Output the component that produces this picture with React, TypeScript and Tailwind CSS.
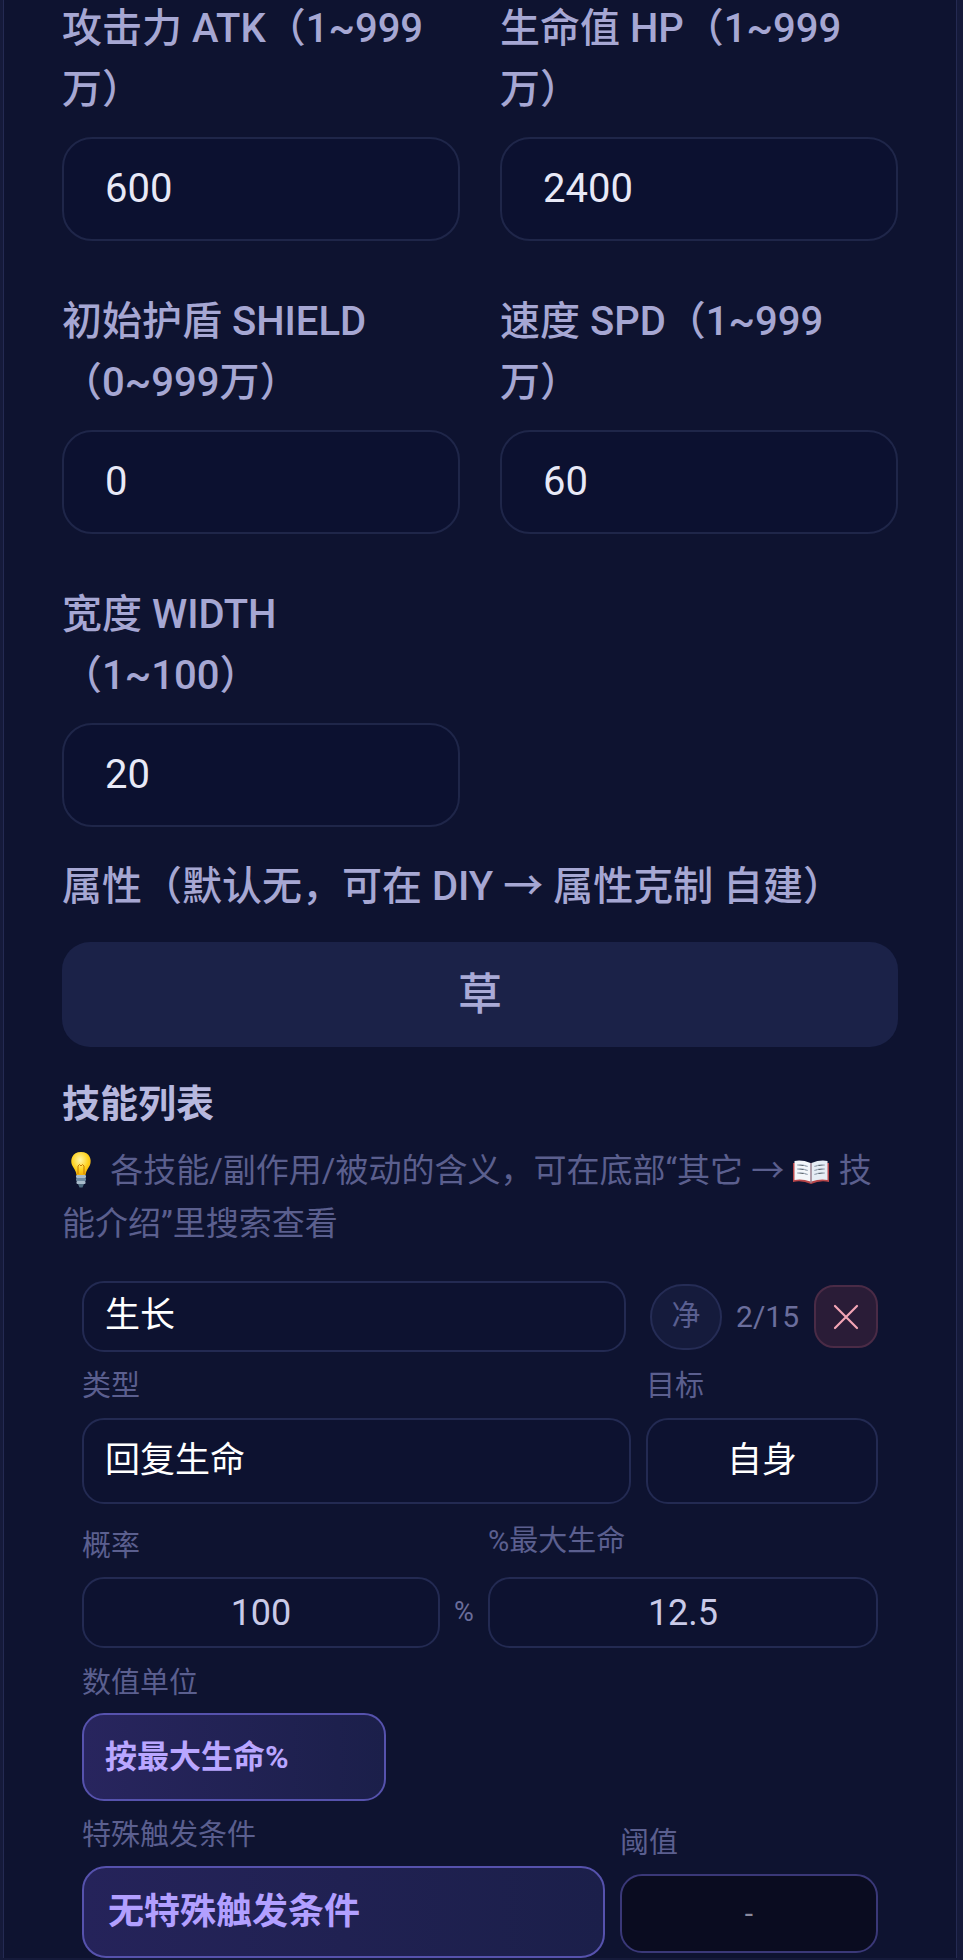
import React from "react";

function Field({ label, value }: { label: React.ReactNode; value: string }) {
  return (
    <div>
      <div className="whitespace-nowrap text-[40px] font-medium leading-[61px] text-[#a6a7d3]">{label}</div>
      <div className="mt-[17px] flex h-[104px] items-center rounded-[30px] border-2 border-[#1f2649] bg-[#0c1130] pl-[41px] text-[40px] text-[#e8e9f7]">
        {value}
      </div>
    </div>
  );
}

function Bulb() {
  return (
    <svg width="40" height="38" viewBox="0 0 40 38" className="inline-block align-[-7px]">
      <defs>
        <radialGradient id="bg1" cx="0.45" cy="0.35" r="0.7">
          <stop offset="0" stopColor="#fff6a8" />
          <stop offset="0.6" stopColor="#ffd21f" />
          <stop offset="1" stopColor="#f2a900" />
        </radialGradient>
      </defs>
      <path d="M19 1 C10 1 8 9 10 14 C11.5 17 14 19.5 14.5 24 L23.5 24 C24 19.5 26.5 17 28 14 C30 9 28 1 19 1 Z" fill="url(#bg1)" />
      <path d="M16 23 L16 15 M22 23 L22 15 M16 15 Q17.5 12 19 15 Q20.5 12 22 15" stroke="#c97a00" strokeWidth="1" fill="none" />
      <rect x="14" y="24" width="10" height="3" rx="1" fill="#a8bccb" />
      <rect x="14" y="27" width="10" height="3" rx="1" fill="#6f8aa0" />
      <rect x="14.5" y="30" width="9" height="3" rx="1" fill="#a8bccb" />
      <path d="M16 33 L22 33 L20.5 36.5 L17.5 36.5 Z" fill="#4f6b80" />
    </svg>
  );
}

function Book() {
  return (
    <svg width="38" height="26" viewBox="0 0 38 26" className="inline-block align-[-3px]">
      <path d="M1 4 L1 23 Q10 21 19 25 Q28 21 37 23 L37 4 Z" fill="#b8474a" />
      <path d="M2.5 2 Q10 0.5 18.5 4 L18.5 22.5 Q10 19.5 2.5 21 Z" fill="#f3f6fa" />
      <path d="M35.5 2 Q28 0.5 19.5 4 L19.5 22.5 Q28 19.5 35.5 21 Z" fill="#e6edf5" />
      <g stroke="#a9b7c8" strokeWidth="1">
        <path d="M5 6 Q11 5 16 7.5" />
        <path d="M5 10 Q11 9 16 11.5" />
        <path d="M5 14 Q11 13 16 15.5" />
        <path d="M33 6 Q27 5 22 7.5" />
        <path d="M33 10 Q27 9 22 11.5" />
        <path d="M33 14 Q27 13 22 15.5" />
      </g>
      <path d="M19 4 L19 24" stroke="#8a9bb0" strokeWidth="1" />
    </svg>
  );
}

const small = "text-[29px] leading-[36px] text-[#5b5f8f]";

export default function App() {
  return (
    <div className="min-h-[1960px] w-full overflow-hidden bg-[#151a3a] [font-family:Roboto,'Noto_Sans_CJK_SC',sans-serif]">
      <div className="ml-[3px] mr-[6px] min-h-[1960px] border-x border-[#242a52] bg-[#0e1330] px-[58px]">
        <div className="-mt-[2px] grid grid-cols-2 gap-x-[40px] gap-y-[50px]">
          <Field label={<>攻击力 ATK（1~999<br />万）</>} value="600" />
          <Field label={<>生命值 HP（1~999<br />万）</>} value="2400" />
          <Field label={<>初始护盾 SHIELD<br />（0~999万）</>} value="0" />
          <Field label={<>速度 SPD（1~999<br />万）</>} value="60" />
          <Field label={<>宽度 WIDTH<br />（1~100）</>} value="20" />
        </div>

        <div className="mt-[29px] whitespace-nowrap text-[40px] font-medium leading-[61px] text-[#a6a7d3]">
          属性（默认无，可在 DIY → 属性克制 自建）
        </div>
        <div className="mt-[25px] flex h-[105px] items-center justify-center rounded-[28px] bg-[#1b2248] text-[44px] font-medium text-[#a9aad6]">
          草
        </div>

        <div className="mt-[29px] text-[38px] font-bold leading-[56px] text-[#b7b8de]">技能列表</div>
        <div className="mt-[12px] whitespace-nowrap text-[33px] leading-[53px] text-[#5b5f8e]">
          <Bulb /> 各技能/副作用/被动的含义，可在底部“其它 → <Book /> 技<br />能介绍”里搜索查看
        </div>

        <div className="mt-[31px] px-[20px]">
          <div className="flex items-center">
            <div className="flex h-[71px] flex-1 items-center rounded-[22px] border-2 border-[#232a52] bg-[#0d1230] pl-[21px] text-[35px] text-white">
              生长
            </div>
            <div className="ml-[24px] flex h-[66px] w-[72px] items-center justify-center rounded-full border-2 border-[#252c55] bg-[#151b3c] text-[29px] text-[#5a5f91]">
              净
            </div>
            <div className="ml-[14px] text-[30px] text-[#6b6e9c]">2/15</div>
            <div className="ml-[15px] flex h-[63px] w-[64px] items-center justify-center rounded-[20px] border-2 border-[#4a2b46] bg-[#2a1c37]">
              <svg width="26" height="26" viewBox="0 0 26 26">
                <path d="M2 2 L24 24 M24 2 L2 24" stroke="#f3a5b5" strokeWidth="2.2" strokeLinecap="round" />
              </svg>
            </div>
          </div>

          <div className="mt-[16px] flex gap-[15px]">
            <div className="flex-1">
              <div className={small}>类型</div>
              <div className="mt-[14px] flex h-[86px] items-center rounded-[22px] border-2 border-[#232a52] bg-[#0d1230] pl-[21px] text-[35px] text-white">
                回复生命
              </div>
            </div>
            <div className="w-[232px]">
              <div className={small}>目标</div>
              <div className="mt-[14px] flex h-[86px] items-center justify-center rounded-[22px] border-2 border-[#232a52] bg-[#0d1230] text-[35px] text-white">
                自身
              </div>
            </div>
          </div>

          <div className="mt-[19px] flex items-end">
            <div className="w-[358px]">
              <div className={`mb-[13px] ${small}`}>概率</div>
              <div className="flex h-[71px] items-center justify-center rounded-[22px] border-2 border-[#232a52] bg-[#0d1230] text-[36px] text-[#c9cae8]">
                100
              </div>
            </div>
            <div className="flex h-[71px] w-[48px] items-center justify-center text-[27px] text-[#6a6d9b]">%</div>
            <div className="flex-1">
              <div className={`mb-[18px] ${small}`}>%最大生命</div>
              <div className="flex h-[71px] items-center justify-center rounded-[22px] border-2 border-[#232a52] bg-[#0d1230] text-[36px] text-[#c9cae8]">
                12.5
              </div>
            </div>
          </div>

          <div className={`mt-[17px] ${small}`}>数值单位</div>
          <div className="mt-[12px] flex h-[88px] w-[304px] items-center rounded-[22px] border-2 border-[#5652ad] bg-gradient-to-r from-[#28255e] to-[#1b1f4a] pl-[21px] text-[32px] font-bold text-[#b9a6ff]">
            按最大生命%
          </div>

          <div className="mt-[16px] flex gap-[15px]">
            <div className="w-[523px]">
              <div className={small}>特殊触发条件</div>
              <div className="mt-[13px] flex h-[92px] items-center rounded-[24px] border-2 border-[#5652ad] bg-gradient-to-r from-[#25235a] to-[#1b1f4a] pl-[24px] text-[36px] font-bold text-[#b29fff]">
                无特殊触发条件
              </div>
            </div>
            <div className="mt-[8px] flex-1">
              <div className={small}>阈值</div>
              <div className="mt-[13px] flex h-[79px] items-center justify-center rounded-[22px] border-2 border-[#3a3878] bg-[#0a0c20] text-[30px] text-[#8a8a9e]">
                -
              </div>
            </div>
          </div>
        </div>
      </div>
    </div>
  );
}
